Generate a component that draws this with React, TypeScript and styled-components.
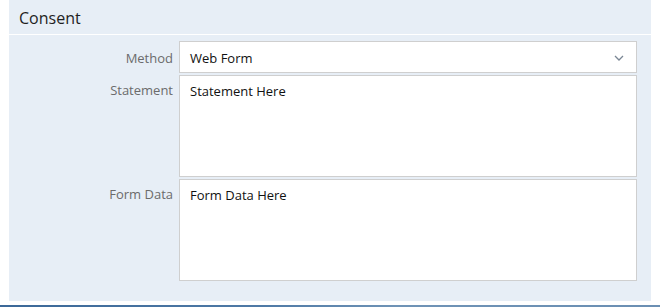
import React from "react";
import styled, { createGlobalStyle } from "styled-components";

const GlobalStyle = createGlobalStyle`
  html, body {
    margin: 0;
    padding: 0;
    background: #ffffff;
    font-family: "Open Sans", "Liberation Sans", sans-serif;
  }
`;

const Page = styled.div`
  width: 660px;
  height: 307px;
  display: flex;
  flex-direction: column;
  overflow: hidden;
`;

const Panel = styled.section`
  margin: 0 9px;
  height: 301px;
  flex-shrink: 0;
  background-color: #e7eef6;
  display: flex;
  flex-direction: column;
`;

const PanelHeader = styled.h2`
  margin: 0;
  height: 35px;
  box-sizing: border-box;
  padding: 2px 0 0 10px;
  display: flex;
  align-items: center;
  font-size: 16px;
  font-weight: 400;
  color: #1f1f1f;
  border-bottom: 1px solid #ffffff;
`;

const FormBody = styled.div`
  padding: 6px 14px 20px 0;
  display: flex;
  flex-direction: column;
  gap: 2px;
`;

const Row = styled.div`
  display: grid;
  grid-template-columns: 164px 1fr;
  column-gap: 6px;
  align-items: start;
`;

const Label = styled.label<{ $top: number }>`
  text-align: right;
  font-size: 13px;
  color: #6b6b6b;
  padding-top: ${(p) => p.$top}px;
  line-height: 18px;
`;

const Select = styled.div`
  height: 32px;
  box-sizing: border-box;
  border: 1px solid #cfcfcf;
  background: #ffffff;
  display: flex;
  align-items: center;
  justify-content: space-between;
  padding: 1px 12px 0 10px;
  font-size: 13px;
  color: #111;
`;

const TextBox = styled.div`
  height: 102px;
  box-sizing: border-box;
  border: 1px solid #cfcfcf;
  background: #ffffff;
  padding: 6px 10px;
  font-size: 13px;
  line-height: 18px;
  color: #111;
`;

const BottomBar = styled.div`
  margin-top: 4px;
  height: 3px;
  flex-shrink: 0;
  background: linear-gradient(to right, #3b6898 0%, #4f7aa6 40%, #6f93b6 60%, #6b8fb3 100%);
`;

const Chevron = () => (
  <svg width="10" height="6" viewBox="0 0 10 6" fill="none">
    <path d="M1 1l4 4 4-4" stroke="#7a8694" strokeWidth="1.3" />
  </svg>
);

export default function App() {
  return (
    <>
      <GlobalStyle />
      <Page>
        <Panel>
          <PanelHeader>Consent</PanelHeader>
          <FormBody>
            <Row>
              <Label $top={8}>Method</Label>
              <Select>
                <span>Web Form</span>
                <Chevron />
              </Select>
            </Row>
            <Row>
              <Label $top={6}>Statement</Label>
              <TextBox>Statement Here</TextBox>
            </Row>
            <Row>
              <Label $top={6}>Form Data</Label>
              <TextBox>Form Data Here</TextBox>
            </Row>
          </FormBody>
        </Panel>
        <BottomBar />
      </Page>
    </>
  );
}
